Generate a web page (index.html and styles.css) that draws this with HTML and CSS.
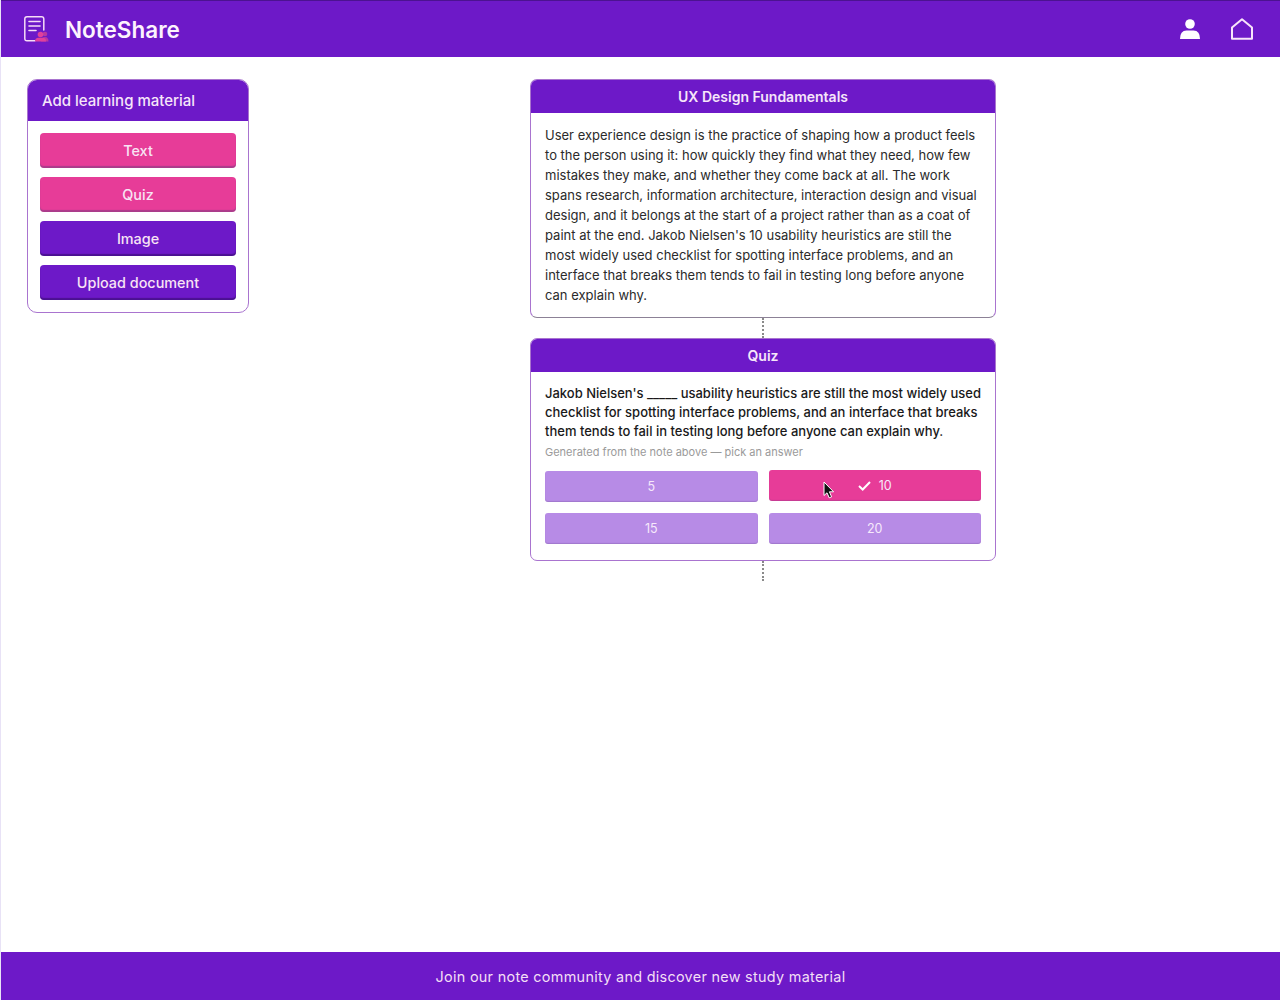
FILE: index.html
```html
<!DOCTYPE html>
<html lang="en">
<head>
    <meta charset="UTF-8">
    <meta name="viewport" content="width=device-width, initial-scale=1.0">
    <title>NoteShare</title>
    <link rel="stylesheet" href="styles.css">
</head>
<body>
    <div class="page">
        <header class="topbar">
            <div class="brand">
                <svg class="brand-icon" width="25" height="26" viewBox="0 0 25 26" fill="none">
                    <path d="M11 24.8H3Q0.8 24.8 0.8 22.5V3Q0.8 0.8 3 0.8H17.5Q19.8 0.8 19.8 3V14" stroke="#f6dcf6" stroke-width="1.5" stroke-linecap="round"/>
                    <path d="M5 5.5H16M5 10H16M5 14.5H12" stroke="#f6dcf6" stroke-width="1.6" stroke-linecap="round"/>
                    <circle cx="21" cy="18" r="2.3" fill="#b9389f"/>
                    <path d="M17 25.5Q17 21 21 21Q24.5 21 24.5 25.5Z" fill="#b9389f"/>
                    <circle cx="16.5" cy="18.5" r="2.8" fill="#e0409c"/>
                    <path d="M11 25.5Q11 21.8 14.5 21.8H18.5Q22 21.8 22 25.5Z" fill="#e0409c"/>
                </svg>
                <span class="brand-name">NoteShare</span>
            </div>
            <nav class="topbar-icons">
                <svg width="20" height="20" viewBox="0 0 20 20" fill="#fff">
                    <circle cx="10" cy="5" r="4.8"/>
                    <path d="M0 20Q0 11.5 6.5 11.5H13.5Q20 11.5 20 20Z"/>
                </svg>
                <svg width="22" height="22" viewBox="0 0 22 22" fill="none" stroke="#f8e4fa" stroke-width="2" stroke-linejoin="round">
                    <path d="M11 1.2L21 9.5V20.8H1V9.5Z"/>
                </svg>
            </nav>
        </header>

        <main class="workspace">
            <aside class="panel">
                <h2 class="panel-title">Add learning material</h2>
                <div class="panel-body">
                    <button class="btn pink">Text</button>
                    <button class="btn pink">Quiz</button>
                    <button class="btn purple">Image</button>
                    <button class="btn purple">Upload document</button>
                </div>
            </aside>

            <section class="board">
                <article class="card note">
                    <h3 class="card-title">UX Design Fundamentals</h3>
                    <p class="note-text">User experience design is the practice of shaping how a product feels to the person using it: how quickly they find what they need, how few mistakes they make, and whether they come back at all. The work spans research, information architecture, interaction design and visual design, and it belongs at the start of a project rather than as a coat of paint at the end. Jakob Nielsen's 10 usability heuristics are still the most widely used checklist for spotting interface problems, and an interface that breaks them tends to fail in testing long before anyone can explain why.</p>
                </article>
                <div class="link"></div>
                <article class="card">
                    <h3 class="card-title">Quiz</h3>
                    <div class="quiz-body">
                        <p class="question">Jakob Nielsen's _____ usability heuristics are still the most widely used checklist for spotting interface problems, and an interface that breaks them tends to fail in testing long before anyone can explain why.</p>
                        <p class="hint">Generated from the note above — pick an answer</p>
                        <div class="answers">
                            <button class="answer">5</button>
                            <button class="answer correct">
                                <svg width="13" height="10" viewBox="0 0 13 10" fill="none" stroke="#fff" stroke-width="2">
                                    <path d="M1 5L4.7 8.5L12 1"/>
                                </svg>
                                10
                                <svg class="cursor" width="12" height="18" viewBox="0 0 12 18">
                                    <path d="M1 1V14.5L4 11.8L6.2 16.8L8.6 15.8L6.4 10.8H10.6Z" fill="#111" stroke="#fff" stroke-width="1"/>
                                </svg>
                            </button>
                            <button class="answer">15</button>
                            <button class="answer">20</button>
                        </div>
                    </div>
                </article>
                <div class="link"></div>
            </section>
        </main>

        <footer class="footer">Join our note community and discover new study material</footer>
    </div>
</body>
</html>
```

FILE: styles.css
```css
* {
    box-sizing: border-box;
}
body {
    margin: 0;
    font-family: Inter, 'Liberation Sans', sans-serif;
    background: white;
}
.page {
    height: 1000px;
    display: flex;
    flex-direction: column;
    border-left: 1px solid #e8e2f6;
    overflow: hidden;
}
.topbar {
    height: 57px;
    flex: none;
    background: #6d19c8;
    border-top: 1px solid #4c1291;
    display: flex;
    align-items: center;
    justify-content: space-between;
    padding: 0 27px 0 23px;
}
.brand {
    display: flex;
    align-items: center;
    gap: 16px;
}
.brand-name {
    color: #fdf3fd;
    font-size: 22.5px;
    font-weight: 600;
}
.topbar-icons {
    display: flex;
    align-items: center;
    gap: 31px;
}
.workspace {
    flex: 1;
    display: flex;
    align-items: flex-start;
    padding: 22px 3px 0 26px;
}
.panel {
    width: 222px;
    flex: none;
    border: 1px solid #a974cf;
    border-radius: 10px;
    overflow: hidden;
}
.panel-title {
    margin: 0;
    height: 41px;
    background: #6d19c8;
    color: #f6e6f9;
    font-size: 15px;
    font-weight: 500;
    line-height: 41px;
    padding-left: 14px;
}
.panel-body {
    padding: 12px;
    display: flex;
    flex-direction: column;
    gap: 9px;
}
.btn {
    height: 35px;
    border: none;
    border-radius: 4px;
    color: #f8e4f4;
    font-family: inherit;
    font-size: 14.4px;
    font-weight: 500;
}
.btn.pink {
    background: #e73c98;
    box-shadow: inset 0 -2px 1px rgba(80,60,120,0.4);
}
.btn.purple {
    background: #6d19c8;
    box-shadow: inset 0 -2px 1px rgba(40,10,90,0.5);
}
.board {
    flex: 1;
    display: flex;
    flex-direction: column;
    align-items: center;
}
.card {
    width: 466px;
    border: 1px solid #a974cf;
    border-radius: 7px;
    overflow: hidden;
}
.card.note {
    border-bottom-color: #8c8196;
}
.card-title {
    margin: 0;
    height: 33px;
    background: #6d19c8;
    color: #f6e6f9;
    font-size: 14px;
    font-weight: 600;
    line-height: 33px;
    text-align: center;
}
.note-text {
    margin: 0;
    padding: 12px 14px;
    color: #2b2b2b;
    font-size: 13px;
    line-height: 20px;
}
.link {
    height: 20px;
    width: 0;
    border-left: 2px dotted #8a8a8a;
}
.quiz-body {
    padding: 12px 14px 16px;
}
.question {
    margin: 0;
    color: #191919;
    font-size: 13px;
    font-weight: 500;
    line-height: 19px;
}
.hint {
    margin: 3px 0 0;
    color: #9a9a9a;
    font-size: 11px;
    line-height: 16px;
}
.answers {
    display: grid;
    grid-template-columns: 1fr 1fr;
    gap: 11px;
    margin-top: 11px;
}
.answer {
    height: 31px;
    border: none;
    border-radius: 3px;
    background: #b78be6;
    box-shadow: inset 0 -1px 1px rgba(90,60,130,0.25);
    color: #f6e9fb;
    font-family: inherit;
    font-size: 12.5px;
    display: flex;
    align-items: center;
    justify-content: center;
}
.answer.correct {
    position: relative;
    background: #e73c98;
    gap: 8px;
    transform: translateY(-1px);
}
.cursor {
    position: absolute;
    left: 54px;
    top: 11px;
}
.footer {
    height: 48px;
    flex: none;
    background: #6d19c8;
    color: #f3dff5;
    font-size: 14.4px;
    line-height: 50px;
    text-align: center;
    letter-spacing: 0.3px;
}
```
